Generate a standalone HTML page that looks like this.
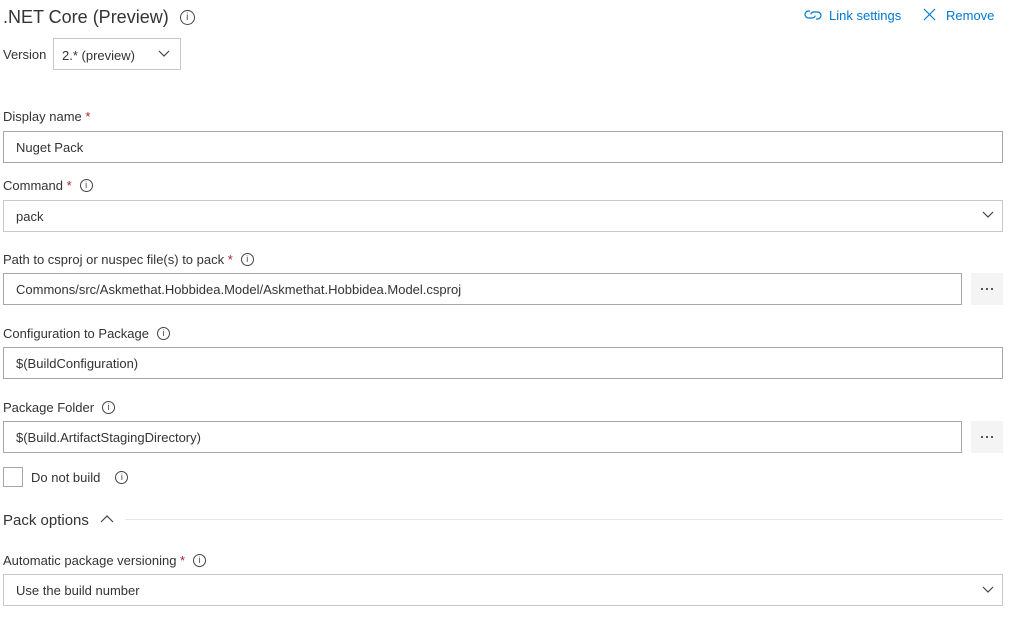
<!DOCTYPE html>
<html><head><style>
body{margin:0;width:1035px;height:618px;background:#fff;font-family:"Liberation Sans",sans-serif;font-size:13px;color:#333;position:relative;overflow:hidden}
.a{position:absolute;white-space:nowrap}
.lbl{line-height:16px}
.req{color:#a4262c}
.box{position:absolute;border:1px solid #c8c8c8;box-sizing:border-box;height:32px;line-height:31px;padding-left:12px;background:#fff}
.dk{border-color:#a6a6a6}
.btn{position:absolute;width:32px;height:32px;background:#f4f4f4}
.btn i{position:absolute;top:15px;width:2px;height:2px;background:#555}
.i{display:inline-block;width:11px;height:11px;border:1px solid #444;border-radius:50%;font-size:9px;line-height:11px;text-align:center;vertical-align:top;margin-top:1px;margin-left:8px;color:#444;font-style:normal}
svg{position:absolute}
</style></head><body>
<div class="a" style="left:3px;top:6px;font-size:18px;color:#333;line-height:22px">.NET Core (Preview) <span class="i" style="width:13px;height:13px;line-height:13px;font-size:10px;margin-left:6px;margin-top:4px">i</span></div>
<svg style="left:804px;top:8px" width="18" height="14" viewBox="0 0 18 14"><path d="M6 3H4.5a3.5 3.5 0 0 0 0 7H8a3.5 3.5 0 0 0 3.3-2.3M12 11h1.5a3.5 3.5 0 0 0 0-7H10a3.5 3.5 0 0 0-3.3 2.3" fill="none" stroke="#0078d4" stroke-width="1.2"/></svg>
<div class="a" style="left:829px;top:8px;color:#0078d4">Link settings</div>
<svg style="left:923px;top:8px" width="13" height="13"><path d="M1 1L12 12M12 1L1 12" stroke="#0078d4" stroke-width="1.2"/></svg>
<div class="a" style="left:946px;top:8px;color:#0078d4">Remove</div>
<div class="a" style="left:3px;top:47px">Version</div>
<div class="box" style="left:53px;top:38px;width:128px;height:32px;padding-left:8px;line-height:33px">2.* (preview)</div>
<svg style="left:158px;top:50px" width="12" height="8"><path d="M1 1l5 5 5-5" fill="none" stroke="#444" stroke-width="1.2"/></svg>

<div class="a lbl" style="left:3px;top:109px">Display name <span class="req">*</span></div>
<div class="box dk" style="left:3px;top:131px;width:1000px">Nuget Pack</div>

<div class="a lbl" style="left:3px;top:178px">Command <span class="req">*</span><span class="i">i</span></div>
<div class="box" style="left:3px;top:200px;width:1000px">pack</div>
<svg style="left:982px;top:211px" width="12" height="8"><path d="M1 1l5 5 5-5" fill="none" stroke="#444" stroke-width="1.2"/></svg>

<div class="a lbl" style="left:3px;top:252px">Path to csproj or nuspec file(s) to pack <span class="req">*</span><span class="i">i</span></div>
<div class="box dk" style="left:3px;top:273px;width:959px">Commons/src/Askmethat.Hobbidea.Model/Askmethat.Hobbidea.Model.csproj</div>
<div class="btn" style="left:971px;top:273px"><i style="left:10px"></i><i style="left:15px"></i><i style="left:20px"></i></div>

<div class="a lbl" style="left:3px;top:326px">Configuration to Package<span class="i">i</span></div>
<div class="box dk" style="left:3px;top:347px;width:1000px">$(BuildConfiguration)</div>

<div class="a lbl" style="left:3px;top:400px">Package Folder<span class="i">i</span></div>
<div class="box dk" style="left:3px;top:421px;width:959px">$(Build.ArtifactStagingDirectory)</div>
<div class="btn" style="left:971px;top:421px"><i style="left:10px"></i><i style="left:15px"></i><i style="left:20px"></i></div>

<div class="a" style="left:3px;top:467px;width:20px;height:20px;border:1px solid #a6a6a6;box-sizing:border-box"></div>
<div class="a lbl" style="left:31px;top:470px">Do not build<span class="i" style="margin-left:15px">i</span></div>

<div class="a" style="left:3px;top:512px;font-size:15px">Pack options</div>
<svg style="left:100px;top:515px" width="14" height="9"><path d="M1 7l6-6 6 6" fill="none" stroke="#444" stroke-width="1.2"/></svg>
<div class="a" style="left:125px;top:519px;width:878px;height:1px;background:#e6e6e6"></div>

<div class="a lbl" style="left:3px;top:553px">Automatic package versioning <span class="req">*</span><span class="i">i</span></div>
<div class="box" style="left:3px;top:574px;width:1000px">Use the build number</div>
<svg style="left:982px;top:586px" width="12" height="8"><path d="M1 1l5 5 5-5" fill="none" stroke="#444" stroke-width="1.2"/></svg>
</body></html>
